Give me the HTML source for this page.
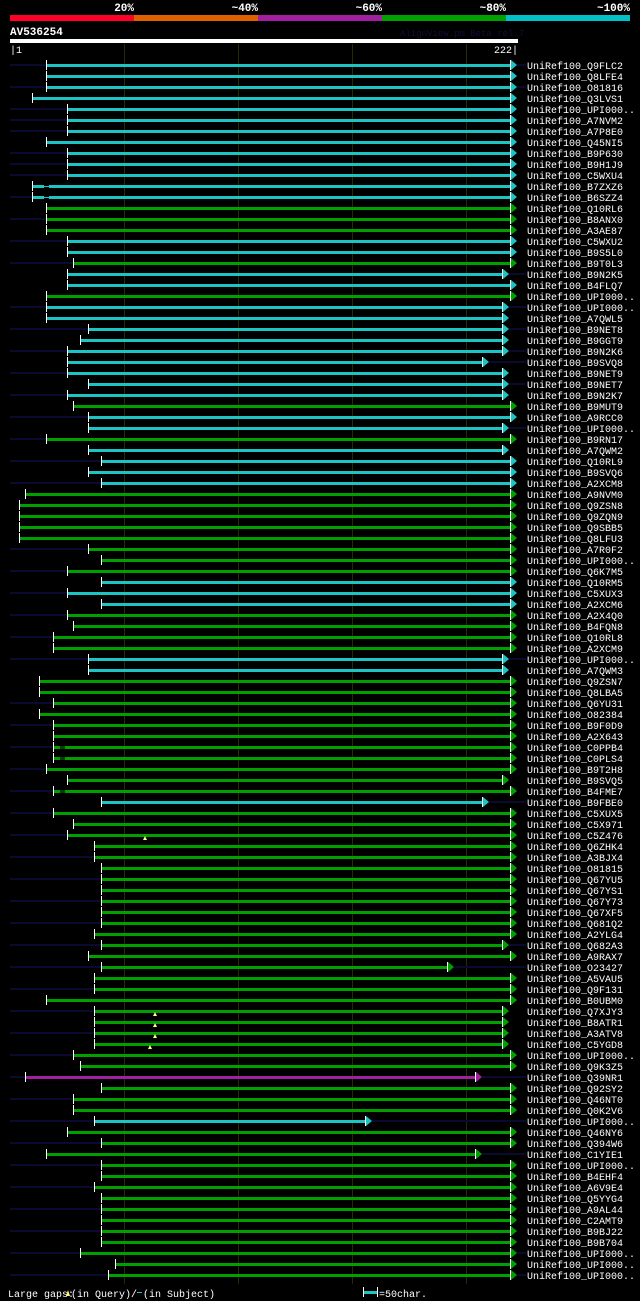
<!DOCTYPE html>
<html><head><meta charset="utf-8"><style>
html,body{margin:0;padding:0;background:#000;}
svg{display:block;}
text{font-family:"Liberation Mono","DejaVu Sans Mono",monospace;}
</style></head><body>
<svg width="640" height="1301" viewBox="0 0 640 1301" xmlns="http://www.w3.org/2000/svg">
<rect width="640" height="1301" fill="#000"/>
<g font-size="11" font-weight="bold" fill="#fff" text-anchor="end">
<text x="134" y="11">20%</text><text x="258" y="11">~40%</text><text x="382" y="11">~60%</text><text x="506" y="11">~80%</text><text x="630" y="11">~100%</text>
</g>
<rect x="10" y="15" width="124" height="6" fill="#ff0028"/>
<rect x="134" y="15" width="124" height="6" fill="#e06000"/>
<rect x="258" y="15" width="124" height="6" fill="#a020a0"/>
<rect x="382" y="15" width="124" height="6" fill="#00a000"/>
<rect x="506" y="15" width="124" height="6" fill="#00c0c8"/>
<text x="10" y="35" font-size="11" font-weight="bold" fill="#fff">AV536254</text>
<text x="400" y="36" font-size="9" fill="#10103a">AlignView.pm Beta rel.7</text>
<rect x="10" y="39" width="508" height="4" fill="#fff"/>
<text x="10" y="53" font-size="10" fill="#fff">|1</text>
<text x="518" y="53" font-size="10" fill="#fff" text-anchor="end">222|</text>
<g fill="#2a2a00">
<rect x="124" y="44" width="1" height="1240"/><rect x="238" y="44" width="1" height="1240"/><rect x="352" y="44" width="1" height="1240"/><rect x="466" y="44" width="1" height="1240"/>
</g>
<defs>
<g id="r"><rect x="0" y="-1" width="16" height="2" fill="#0a0a30"/></g>
</defs>
<g id="rows" font-size="10" fill="#fff">
<!-- each row: bar, start tick, end tick+arrow, label -->
</g>
<g font-size="10">
<!-- rows generated statically -->
<g transform="translate(0,65)"><rect x="10" y="-1" width="36" height="2" fill="#0a0a30"/><rect x="46" y="-1" width="464" height="3" fill="#1cc4c4"/><rect x="46" y="-5" width="1" height="10" fill="#fff"/><rect x="510" y="-5" width="1" height="10" fill="#fff"/><polygon points="511,-5 517,0 511,5" fill="#1cc4c4"/><rect x="517" y="-1" width="9" height="2" fill="#0a0a30"/><text x="527" y="4" fill="#fff">UniRef100_Q9FLC2</text></g>
<g transform="translate(0,76)"><rect x="46" y="-1" width="464" height="3" fill="#1cc4c4"/><rect x="46" y="-5" width="1" height="10" fill="#fff"/><rect x="510" y="-5" width="1" height="10" fill="#fff"/><polygon points="511,-5 517,0 511,5" fill="#1cc4c4"/><text x="527" y="4" fill="#fff">UniRef100_Q8LFE4</text></g>
<g transform="translate(0,87)"><rect x="10" y="-1" width="36" height="2" fill="#0a0a30"/><rect x="46" y="-1" width="464" height="3" fill="#1cc4c4"/><rect x="46" y="-5" width="1" height="10" fill="#fff"/><rect x="510" y="-5" width="1" height="10" fill="#fff"/><polygon points="511,-5 517,0 511,5" fill="#1cc4c4"/><rect x="517" y="-1" width="9" height="2" fill="#0a0a30"/><text x="527" y="4" fill="#fff">UniRef100_O81816</text></g>
<g transform="translate(0,98)"><rect x="32" y="-1" width="478" height="3" fill="#1cc4c4"/><rect x="32" y="-5" width="1" height="10" fill="#fff"/><rect x="510" y="-5" width="1" height="10" fill="#fff"/><polygon points="511,-5 517,0 511,5" fill="#1cc4c4"/><text x="527" y="4" fill="#fff">UniRef100_Q3LVS1</text></g>
<g transform="translate(0,109)"><rect x="10" y="-1" width="57" height="2" fill="#0a0a30"/><rect x="67" y="-1" width="443" height="3" fill="#1cc4c4"/><rect x="67" y="-5" width="1" height="10" fill="#fff"/><rect x="510" y="-5" width="1" height="10" fill="#fff"/><polygon points="511,-5 517,0 511,5" fill="#1cc4c4"/><text x="527" y="4" fill="#fff">UniRef100_UPI000..</text></g>
<g transform="translate(0,120)"><rect x="10" y="-1" width="57" height="2" fill="#0a0a30"/><rect x="67" y="-1" width="443" height="3" fill="#1cc4c4"/><rect x="67" y="-5" width="1" height="10" fill="#fff"/><rect x="510" y="-5" width="1" height="10" fill="#fff"/><polygon points="511,-5 517,0 511,5" fill="#1cc4c4"/><text x="527" y="4" fill="#fff">UniRef100_A7NVM2</text></g>
<g transform="translate(0,131)"><rect x="10" y="-1" width="57" height="2" fill="#0a0a30"/><rect x="67" y="-1" width="443" height="3" fill="#1cc4c4"/><rect x="67" y="-5" width="1" height="10" fill="#fff"/><rect x="510" y="-5" width="1" height="10" fill="#fff"/><polygon points="511,-5 517,0 511,5" fill="#1cc4c4"/><text x="527" y="4" fill="#fff">UniRef100_A7P8E0</text></g>
<g transform="translate(0,142)"><rect x="46" y="-1" width="464" height="3" fill="#1cc4c4"/><rect x="46" y="-5" width="1" height="10" fill="#fff"/><rect x="510" y="-5" width="1" height="10" fill="#fff"/><polygon points="511,-5 517,0 511,5" fill="#1cc4c4"/><text x="527" y="4" fill="#fff">UniRef100_Q45NI5</text></g>
<g transform="translate(0,153)"><rect x="10" y="-1" width="57" height="2" fill="#0a0a30"/><rect x="67" y="-1" width="443" height="3" fill="#1cc4c4"/><rect x="67" y="-5" width="1" height="10" fill="#fff"/><rect x="510" y="-5" width="1" height="10" fill="#fff"/><polygon points="511,-5 517,0 511,5" fill="#1cc4c4"/><text x="527" y="4" fill="#fff">UniRef100_B9P630</text></g>
<g transform="translate(0,164)"><rect x="10" y="-1" width="57" height="2" fill="#0a0a30"/><rect x="67" y="-1" width="443" height="3" fill="#1cc4c4"/><rect x="67" y="-5" width="1" height="10" fill="#fff"/><rect x="510" y="-5" width="1" height="10" fill="#fff"/><polygon points="511,-5 517,0 511,5" fill="#1cc4c4"/><text x="527" y="4" fill="#fff">UniRef100_B9H1J9</text></g>
<g transform="translate(0,175)"><rect x="10" y="-1" width="57" height="2" fill="#0a0a30"/><rect x="67" y="-1" width="443" height="3" fill="#1cc4c4"/><rect x="67" y="-5" width="1" height="10" fill="#fff"/><rect x="510" y="-5" width="1" height="10" fill="#fff"/><polygon points="511,-5 517,0 511,5" fill="#1cc4c4"/><text x="527" y="4" fill="#fff">UniRef100_C5WXU4</text></g>
<g transform="translate(0,186)"><rect x="32" y="-1" width="12" height="3" fill="#1cc4c4"/><rect x="44" y="0" width="5" height="1" fill="#1cc4c4"/><rect x="49" y="-1" width="461" height="3" fill="#1cc4c4"/><rect x="32" y="-5" width="1" height="10" fill="#fff"/><rect x="510" y="-5" width="1" height="10" fill="#fff"/><polygon points="511,-5 517,0 511,5" fill="#1cc4c4"/><text x="527" y="4" fill="#fff">UniRef100_B7ZXZ6</text></g>
<g transform="translate(0,197)"><rect x="10" y="-1" width="22" height="2" fill="#0a0a30"/><rect x="32" y="-1" width="12" height="3" fill="#1cc4c4"/><rect x="44" y="0" width="5" height="1" fill="#1cc4c4"/><rect x="49" y="-1" width="461" height="3" fill="#1cc4c4"/><rect x="32" y="-5" width="1" height="10" fill="#fff"/><rect x="510" y="-5" width="1" height="10" fill="#fff"/><polygon points="511,-5 517,0 511,5" fill="#1cc4c4"/><text x="527" y="4" fill="#fff">UniRef100_B6SZZ4</text></g>
<g transform="translate(0,208)"><rect x="46" y="-1" width="464" height="3" fill="#00a000"/><rect x="46" y="-5" width="1" height="10" fill="#fff"/><rect x="510" y="-5" width="1" height="10" fill="#fff"/><polygon points="511,-5 517,0 511,5" fill="#00a000"/><text x="527" y="4" fill="#fff">UniRef100_Q10RL6</text></g>
<g transform="translate(0,219)"><rect x="10" y="-1" width="36" height="2" fill="#0a0a30"/><rect x="46" y="-1" width="464" height="3" fill="#00a000"/><rect x="46" y="-5" width="1" height="10" fill="#fff"/><rect x="510" y="-5" width="1" height="10" fill="#fff"/><polygon points="511,-5 517,0 511,5" fill="#00a000"/><text x="527" y="4" fill="#fff">UniRef100_B8ANX0</text></g>
<g transform="translate(0,230)"><rect x="46" y="-1" width="464" height="3" fill="#00a000"/><rect x="46" y="-5" width="1" height="10" fill="#fff"/><rect x="510" y="-5" width="1" height="10" fill="#fff"/><polygon points="511,-5 517,0 511,5" fill="#00a000"/><text x="527" y="4" fill="#fff">UniRef100_A3AE87</text></g>
<g transform="translate(0,241)"><rect x="10" y="-1" width="57" height="2" fill="#0a0a30"/><rect x="67" y="-1" width="443" height="3" fill="#1cc4c4"/><rect x="67" y="-5" width="1" height="10" fill="#fff"/><rect x="510" y="-5" width="1" height="10" fill="#fff"/><polygon points="511,-5 517,0 511,5" fill="#1cc4c4"/><text x="527" y="4" fill="#fff">UniRef100_C5WXU2</text></g>
<g transform="translate(0,252)"><rect x="67" y="-1" width="443" height="3" fill="#1cc4c4"/><rect x="67" y="-5" width="1" height="10" fill="#fff"/><rect x="510" y="-5" width="1" height="10" fill="#fff"/><polygon points="511,-5 517,0 511,5" fill="#1cc4c4"/><text x="527" y="4" fill="#fff">UniRef100_B9S5L0</text></g>
<g transform="translate(0,263)"><rect x="10" y="-1" width="63" height="2" fill="#0a0a30"/><rect x="73" y="-1" width="437" height="3" fill="#00a000"/><rect x="73" y="-5" width="1" height="10" fill="#fff"/><rect x="510" y="-5" width="1" height="10" fill="#fff"/><polygon points="511,-5 517,0 511,5" fill="#00a000"/><text x="527" y="4" fill="#fff">UniRef100_B9T0L3</text></g>
<g transform="translate(0,274)"><rect x="67" y="-1" width="435" height="3" fill="#1cc4c4"/><rect x="67" y="-5" width="1" height="10" fill="#fff"/><rect x="502" y="-5" width="1" height="10" fill="#fff"/><polygon points="503,-5 509,0 503,5" fill="#1cc4c4"/><rect x="509" y="-1" width="17" height="2" fill="#0a0a30"/><text x="527" y="4" fill="#fff">UniRef100_B9N2K5</text></g>
<g transform="translate(0,285)"><rect x="67" y="-1" width="443" height="3" fill="#1cc4c4"/><rect x="67" y="-5" width="1" height="10" fill="#fff"/><rect x="510" y="-5" width="1" height="10" fill="#fff"/><polygon points="511,-5 517,0 511,5" fill="#1cc4c4"/><text x="527" y="4" fill="#fff">UniRef100_B4FLQ7</text></g>
<g transform="translate(0,296)"><rect x="46" y="-1" width="464" height="3" fill="#00a000"/><rect x="46" y="-5" width="1" height="10" fill="#fff"/><rect x="510" y="-5" width="1" height="10" fill="#fff"/><polygon points="511,-5 517,0 511,5" fill="#00a000"/><text x="527" y="4" fill="#fff">UniRef100_UPI000..</text></g>
<g transform="translate(0,307)"><rect x="10" y="-1" width="36" height="2" fill="#0a0a30"/><rect x="46" y="-1" width="456" height="3" fill="#1cc4c4"/><rect x="46" y="-5" width="1" height="10" fill="#fff"/><rect x="502" y="-5" width="1" height="10" fill="#fff"/><polygon points="503,-5 509,0 503,5" fill="#1cc4c4"/><rect x="509" y="-1" width="17" height="2" fill="#0a0a30"/><text x="527" y="4" fill="#fff">UniRef100_UPI000..</text></g>
<g transform="translate(0,318)"><rect x="46" y="-1" width="456" height="3" fill="#1cc4c4"/><rect x="46" y="-5" width="1" height="10" fill="#fff"/><rect x="502" y="-5" width="1" height="10" fill="#fff"/><polygon points="503,-5 509,0 503,5" fill="#1cc4c4"/><text x="527" y="4" fill="#fff">UniRef100_A7QWL5</text></g>
<g transform="translate(0,329)"><rect x="10" y="-1" width="78" height="2" fill="#0a0a30"/><rect x="88" y="-1" width="414" height="3" fill="#1cc4c4"/><rect x="88" y="-5" width="1" height="10" fill="#fff"/><rect x="502" y="-5" width="1" height="10" fill="#fff"/><polygon points="503,-5 509,0 503,5" fill="#1cc4c4"/><rect x="509" y="-1" width="17" height="2" fill="#0a0a30"/><text x="527" y="4" fill="#fff">UniRef100_B9NET8</text></g>
<g transform="translate(0,340)"><rect x="80" y="-1" width="422" height="3" fill="#1cc4c4"/><rect x="80" y="-5" width="1" height="10" fill="#fff"/><rect x="502" y="-5" width="1" height="10" fill="#fff"/><polygon points="503,-5 509,0 503,5" fill="#1cc4c4"/><text x="527" y="4" fill="#fff">UniRef100_B9GGT9</text></g>
<g transform="translate(0,351)"><rect x="10" y="-1" width="57" height="2" fill="#0a0a30"/><rect x="67" y="-1" width="435" height="3" fill="#1cc4c4"/><rect x="67" y="-5" width="1" height="10" fill="#fff"/><rect x="502" y="-5" width="1" height="10" fill="#fff"/><polygon points="503,-5 509,0 503,5" fill="#1cc4c4"/><rect x="509" y="-1" width="17" height="2" fill="#0a0a30"/><text x="527" y="4" fill="#fff">UniRef100_B9N2K6</text></g>
<g transform="translate(0,362)"><rect x="67" y="-1" width="415" height="3" fill="#1cc4c4"/><rect x="67" y="-5" width="1" height="10" fill="#fff"/><rect x="482" y="-5" width="1" height="10" fill="#fff"/><polygon points="483,-5 489,0 483,5" fill="#1cc4c4"/><rect x="489" y="-1" width="37" height="2" fill="#0a0a30"/><text x="527" y="4" fill="#fff">UniRef100_B9SVQ8</text></g>
<g transform="translate(0,373)"><rect x="10" y="-1" width="57" height="2" fill="#0a0a30"/><rect x="67" y="-1" width="435" height="3" fill="#1cc4c4"/><rect x="67" y="-5" width="1" height="10" fill="#fff"/><rect x="502" y="-5" width="1" height="10" fill="#fff"/><polygon points="503,-5 509,0 503,5" fill="#1cc4c4"/><text x="527" y="4" fill="#fff">UniRef100_B9NET9</text></g>
<g transform="translate(0,384)"><rect x="88" y="-1" width="414" height="3" fill="#1cc4c4"/><rect x="88" y="-5" width="1" height="10" fill="#fff"/><rect x="502" y="-5" width="1" height="10" fill="#fff"/><polygon points="503,-5 509,0 503,5" fill="#1cc4c4"/><rect x="509" y="-1" width="17" height="2" fill="#0a0a30"/><text x="527" y="4" fill="#fff">UniRef100_B9NET7</text></g>
<g transform="translate(0,395)"><rect x="10" y="-1" width="57" height="2" fill="#0a0a30"/><rect x="67" y="-1" width="435" height="3" fill="#1cc4c4"/><rect x="67" y="-5" width="1" height="10" fill="#fff"/><rect x="502" y="-5" width="1" height="10" fill="#fff"/><polygon points="503,-5 509,0 503,5" fill="#1cc4c4"/><text x="527" y="4" fill="#fff">UniRef100_B9N2K7</text></g>
<g transform="translate(0,406)"><rect x="73" y="-1" width="437" height="3" fill="#00a000"/><rect x="73" y="-5" width="1" height="10" fill="#fff"/><rect x="510" y="-5" width="1" height="10" fill="#fff"/><polygon points="511,-5 517,0 511,5" fill="#00a000"/><text x="527" y="4" fill="#fff">UniRef100_B9MUT9</text></g>
<g transform="translate(0,417)"><rect x="10" y="-1" width="78" height="2" fill="#0a0a30"/><rect x="88" y="-1" width="422" height="3" fill="#1cc4c4"/><rect x="88" y="-5" width="1" height="10" fill="#fff"/><rect x="510" y="-5" width="1" height="10" fill="#fff"/><polygon points="511,-5 517,0 511,5" fill="#1cc4c4"/><text x="527" y="4" fill="#fff">UniRef100_A9RCC0</text></g>
<g transform="translate(0,428)"><rect x="88" y="-1" width="414" height="3" fill="#1cc4c4"/><rect x="88" y="-5" width="1" height="10" fill="#fff"/><rect x="502" y="-5" width="1" height="10" fill="#fff"/><polygon points="503,-5 509,0 503,5" fill="#1cc4c4"/><rect x="509" y="-1" width="17" height="2" fill="#0a0a30"/><text x="527" y="4" fill="#fff">UniRef100_UPI000..</text></g>
<g transform="translate(0,439)"><rect x="10" y="-1" width="36" height="2" fill="#0a0a30"/><rect x="46" y="-1" width="464" height="3" fill="#00a000"/><rect x="46" y="-5" width="1" height="10" fill="#fff"/><rect x="510" y="-5" width="1" height="10" fill="#fff"/><polygon points="511,-5 517,0 511,5" fill="#00a000"/><text x="527" y="4" fill="#fff">UniRef100_B9RN17</text></g>
<g transform="translate(0,450)"><rect x="88" y="-1" width="414" height="3" fill="#1cc4c4"/><rect x="88" y="-5" width="1" height="10" fill="#fff"/><rect x="502" y="-5" width="1" height="10" fill="#fff"/><polygon points="503,-5 509,0 503,5" fill="#1cc4c4"/><text x="527" y="4" fill="#fff">UniRef100_A7QWM2</text></g>
<g transform="translate(0,461)"><rect x="10" y="-1" width="91" height="2" fill="#0a0a30"/><rect x="101" y="-1" width="409" height="3" fill="#1cc4c4"/><rect x="101" y="-5" width="1" height="10" fill="#fff"/><rect x="510" y="-5" width="1" height="10" fill="#fff"/><polygon points="511,-5 517,0 511,5" fill="#1cc4c4"/><text x="527" y="4" fill="#fff">UniRef100_Q10RL9</text></g>
<g transform="translate(0,472)"><rect x="88" y="-1" width="422" height="3" fill="#1cc4c4"/><rect x="88" y="-5" width="1" height="10" fill="#fff"/><rect x="510" y="-5" width="1" height="10" fill="#fff"/><polygon points="511,-5 517,0 511,5" fill="#1cc4c4"/><text x="527" y="4" fill="#fff">UniRef100_B9SVQ6</text></g>
<g transform="translate(0,483)"><rect x="10" y="-1" width="91" height="2" fill="#0a0a30"/><rect x="101" y="-1" width="409" height="3" fill="#1cc4c4"/><rect x="101" y="-5" width="1" height="10" fill="#fff"/><rect x="510" y="-5" width="1" height="10" fill="#fff"/><polygon points="511,-5 517,0 511,5" fill="#1cc4c4"/><text x="527" y="4" fill="#fff">UniRef100_A2XCM8</text></g>
<g transform="translate(0,494)"><rect x="25" y="-1" width="485" height="3" fill="#00a000"/><rect x="25" y="-5" width="1" height="10" fill="#fff"/><rect x="510" y="-5" width="1" height="10" fill="#fff"/><polygon points="511,-5 517,0 511,5" fill="#00a000"/><text x="527" y="4" fill="#fff">UniRef100_A9NVM0</text></g>
<g transform="translate(0,505)"><rect x="19" y="-1" width="491" height="3" fill="#00a000"/><rect x="19" y="-5" width="1" height="10" fill="#fff"/><rect x="510" y="-5" width="1" height="10" fill="#fff"/><polygon points="511,-5 517,0 511,5" fill="#00a000"/><text x="527" y="4" fill="#fff">UniRef100_Q9ZSN8</text></g>
<g transform="translate(0,516)"><rect x="19" y="-1" width="491" height="3" fill="#00a000"/><rect x="19" y="-5" width="1" height="10" fill="#fff"/><rect x="510" y="-5" width="1" height="10" fill="#fff"/><polygon points="511,-5 517,0 511,5" fill="#00a000"/><text x="527" y="4" fill="#fff">UniRef100_Q9ZQN9</text></g>
<g transform="translate(0,527)"><rect x="19" y="-1" width="491" height="3" fill="#00a000"/><rect x="19" y="-5" width="1" height="10" fill="#fff"/><rect x="510" y="-5" width="1" height="10" fill="#fff"/><polygon points="511,-5 517,0 511,5" fill="#00a000"/><text x="527" y="4" fill="#fff">UniRef100_Q9SBB5</text></g>
<g transform="translate(0,538)"><rect x="19" y="-1" width="491" height="3" fill="#00a000"/><rect x="19" y="-5" width="1" height="10" fill="#fff"/><rect x="510" y="-5" width="1" height="10" fill="#fff"/><polygon points="511,-5 517,0 511,5" fill="#00a000"/><text x="527" y="4" fill="#fff">UniRef100_Q8LFU3</text></g>
<g transform="translate(0,549)"><rect x="10" y="-1" width="78" height="2" fill="#0a0a30"/><rect x="88" y="-1" width="422" height="3" fill="#00a000"/><rect x="88" y="-5" width="1" height="10" fill="#fff"/><rect x="510" y="-5" width="1" height="10" fill="#fff"/><polygon points="511,-5 517,0 511,5" fill="#00a000"/><text x="527" y="4" fill="#fff">UniRef100_A7R0F2</text></g>
<g transform="translate(0,560)"><rect x="101" y="-1" width="409" height="3" fill="#00a000"/><rect x="101" y="-5" width="1" height="10" fill="#fff"/><rect x="510" y="-5" width="1" height="10" fill="#fff"/><polygon points="511,-5 517,0 511,5" fill="#00a000"/><text x="527" y="4" fill="#fff">UniRef100_UPI000..</text></g>
<g transform="translate(0,571)"><rect x="10" y="-1" width="57" height="2" fill="#0a0a30"/><rect x="67" y="-1" width="443" height="3" fill="#00a000"/><rect x="67" y="-5" width="1" height="10" fill="#fff"/><rect x="510" y="-5" width="1" height="10" fill="#fff"/><polygon points="511,-5 517,0 511,5" fill="#00a000"/><text x="527" y="4" fill="#fff">UniRef100_Q6K7M5</text></g>
<g transform="translate(0,582)"><rect x="101" y="-1" width="409" height="3" fill="#1cc4c4"/><rect x="101" y="-5" width="1" height="10" fill="#fff"/><rect x="510" y="-5" width="1" height="10" fill="#fff"/><polygon points="511,-5 517,0 511,5" fill="#1cc4c4"/><text x="527" y="4" fill="#fff">UniRef100_Q10RM5</text></g>
<g transform="translate(0,593)"><rect x="10" y="-1" width="57" height="2" fill="#0a0a30"/><rect x="67" y="-1" width="443" height="3" fill="#1cc4c4"/><rect x="67" y="-5" width="1" height="10" fill="#fff"/><rect x="510" y="-5" width="1" height="10" fill="#fff"/><polygon points="511,-5 517,0 511,5" fill="#1cc4c4"/><text x="527" y="4" fill="#fff">UniRef100_C5XUX3</text></g>
<g transform="translate(0,604)"><rect x="101" y="-1" width="409" height="3" fill="#1cc4c4"/><rect x="101" y="-5" width="1" height="10" fill="#fff"/><rect x="510" y="-5" width="1" height="10" fill="#fff"/><polygon points="511,-5 517,0 511,5" fill="#1cc4c4"/><text x="527" y="4" fill="#fff">UniRef100_A2XCM6</text></g>
<g transform="translate(0,615)"><rect x="10" y="-1" width="57" height="2" fill="#0a0a30"/><rect x="67" y="-1" width="443" height="3" fill="#00a000"/><rect x="67" y="-5" width="1" height="10" fill="#fff"/><rect x="510" y="-5" width="1" height="10" fill="#fff"/><polygon points="511,-5 517,0 511,5" fill="#00a000"/><text x="527" y="4" fill="#fff">UniRef100_A2X4Q0</text></g>
<g transform="translate(0,626)"><rect x="73" y="-1" width="437" height="3" fill="#00a000"/><rect x="73" y="-5" width="1" height="10" fill="#fff"/><rect x="510" y="-5" width="1" height="10" fill="#fff"/><polygon points="511,-5 517,0 511,5" fill="#00a000"/><text x="527" y="4" fill="#fff">UniRef100_B4FQN8</text></g>
<g transform="translate(0,637)"><rect x="10" y="-1" width="43" height="2" fill="#0a0a30"/><rect x="53" y="-1" width="457" height="3" fill="#00a000"/><rect x="53" y="-5" width="1" height="10" fill="#fff"/><rect x="510" y="-5" width="1" height="10" fill="#fff"/><polygon points="511,-5 517,0 511,5" fill="#00a000"/><text x="527" y="4" fill="#fff">UniRef100_Q10RL8</text></g>
<g transform="translate(0,648)"><rect x="53" y="-1" width="457" height="3" fill="#00a000"/><rect x="53" y="-5" width="1" height="10" fill="#fff"/><rect x="510" y="-5" width="1" height="10" fill="#fff"/><polygon points="511,-5 517,0 511,5" fill="#00a000"/><text x="527" y="4" fill="#fff">UniRef100_A2XCM9</text></g>
<g transform="translate(0,659)"><rect x="10" y="-1" width="78" height="2" fill="#0a0a30"/><rect x="88" y="-1" width="414" height="3" fill="#1cc4c4"/><rect x="88" y="-5" width="1" height="10" fill="#fff"/><rect x="502" y="-5" width="1" height="10" fill="#fff"/><polygon points="503,-5 509,0 503,5" fill="#1cc4c4"/><rect x="509" y="-1" width="17" height="2" fill="#0a0a30"/><text x="527" y="4" fill="#fff">UniRef100_UPI000..</text></g>
<g transform="translate(0,670)"><rect x="88" y="-1" width="414" height="3" fill="#1cc4c4"/><rect x="88" y="-5" width="1" height="10" fill="#fff"/><rect x="502" y="-5" width="1" height="10" fill="#fff"/><polygon points="503,-5 509,0 503,5" fill="#1cc4c4"/><text x="527" y="4" fill="#fff">UniRef100_A7QWM3</text></g>
<g transform="translate(0,681)"><rect x="39" y="-1" width="471" height="3" fill="#00a000"/><rect x="39" y="-5" width="1" height="10" fill="#fff"/><rect x="510" y="-5" width="1" height="10" fill="#fff"/><polygon points="511,-5 517,0 511,5" fill="#00a000"/><text x="527" y="4" fill="#fff">UniRef100_Q9ZSN7</text></g>
<g transform="translate(0,692)"><rect x="39" y="-1" width="471" height="3" fill="#00a000"/><rect x="39" y="-5" width="1" height="10" fill="#fff"/><rect x="510" y="-5" width="1" height="10" fill="#fff"/><polygon points="511,-5 517,0 511,5" fill="#00a000"/><text x="527" y="4" fill="#fff">UniRef100_Q8LBA5</text></g>
<g transform="translate(0,703)"><rect x="10" y="-1" width="43" height="2" fill="#0a0a30"/><rect x="53" y="-1" width="457" height="3" fill="#00a000"/><rect x="53" y="-5" width="1" height="10" fill="#fff"/><rect x="510" y="-5" width="1" height="10" fill="#fff"/><polygon points="511,-5 517,0 511,5" fill="#00a000"/><text x="527" y="4" fill="#fff">UniRef100_Q6YU31</text></g>
<g transform="translate(0,714)"><rect x="39" y="-1" width="471" height="3" fill="#00a000"/><rect x="39" y="-5" width="1" height="10" fill="#fff"/><rect x="510" y="-5" width="1" height="10" fill="#fff"/><polygon points="511,-5 517,0 511,5" fill="#00a000"/><text x="527" y="4" fill="#fff">UniRef100_O82384</text></g>
<g transform="translate(0,725)"><rect x="10" y="-1" width="43" height="2" fill="#0a0a30"/><rect x="53" y="-1" width="457" height="3" fill="#00a000"/><rect x="53" y="-5" width="1" height="10" fill="#fff"/><rect x="510" y="-5" width="1" height="10" fill="#fff"/><polygon points="511,-5 517,0 511,5" fill="#00a000"/><text x="527" y="4" fill="#fff">UniRef100_B9F0D9</text></g>
<g transform="translate(0,736)"><rect x="53" y="-1" width="457" height="3" fill="#00a000"/><rect x="53" y="-5" width="1" height="10" fill="#fff"/><rect x="510" y="-5" width="1" height="10" fill="#fff"/><polygon points="511,-5 517,0 511,5" fill="#00a000"/><text x="527" y="4" fill="#fff">UniRef100_A2X643</text></g>
<g transform="translate(0,747)"><rect x="10" y="-1" width="43" height="2" fill="#0a0a30"/><rect x="53" y="-1" width="457" height="3" fill="#00a000"/><rect x="60" y="-1" width="5" height="3" fill="#004000"/><rect x="53" y="-5" width="1" height="10" fill="#fff"/><rect x="510" y="-5" width="1" height="10" fill="#fff"/><polygon points="511,-5 517,0 511,5" fill="#00a000"/><text x="527" y="4" fill="#fff">UniRef100_C0PPB4</text></g>
<g transform="translate(0,758)"><rect x="53" y="-1" width="457" height="3" fill="#00a000"/><rect x="60" y="-1" width="5" height="3" fill="#004000"/><rect x="53" y="-5" width="1" height="10" fill="#fff"/><rect x="510" y="-5" width="1" height="10" fill="#fff"/><polygon points="511,-5 517,0 511,5" fill="#00a000"/><text x="527" y="4" fill="#fff">UniRef100_C0PLS4</text></g>
<g transform="translate(0,769)"><rect x="10" y="-1" width="36" height="2" fill="#0a0a30"/><rect x="46" y="-1" width="464" height="3" fill="#00a000"/><rect x="46" y="-5" width="1" height="10" fill="#fff"/><rect x="510" y="-5" width="1" height="10" fill="#fff"/><polygon points="511,-5 517,0 511,5" fill="#00a000"/><text x="527" y="4" fill="#fff">UniRef100_B9T2H8</text></g>
<g transform="translate(0,780)"><rect x="67" y="-1" width="435" height="3" fill="#00a000"/><rect x="67" y="-5" width="1" height="10" fill="#fff"/><rect x="502" y="-5" width="1" height="10" fill="#fff"/><polygon points="503,-5 509,0 503,5" fill="#00a000"/><text x="527" y="4" fill="#fff">UniRef100_B9SVQ5</text></g>
<g transform="translate(0,791)"><rect x="10" y="-1" width="43" height="2" fill="#0a0a30"/><rect x="53" y="-1" width="457" height="3" fill="#00a000"/><rect x="60" y="-1" width="5" height="3" fill="#004000"/><rect x="53" y="-5" width="1" height="10" fill="#fff"/><rect x="510" y="-5" width="1" height="10" fill="#fff"/><polygon points="511,-5 517,0 511,5" fill="#00a000"/><text x="527" y="4" fill="#fff">UniRef100_B4FME7</text></g>
<g transform="translate(0,802)"><rect x="101" y="-1" width="381" height="3" fill="#1cc4c4"/><rect x="101" y="-5" width="1" height="10" fill="#fff"/><rect x="482" y="-5" width="1" height="10" fill="#fff"/><polygon points="483,-5 489,0 483,5" fill="#1cc4c4"/><rect x="489" y="-1" width="37" height="2" fill="#0a0a30"/><text x="527" y="4" fill="#fff">UniRef100_B9FBE0</text></g>
<g transform="translate(0,813)"><rect x="10" y="-1" width="43" height="2" fill="#0a0a30"/><rect x="53" y="-1" width="457" height="3" fill="#00a000"/><rect x="53" y="-5" width="1" height="10" fill="#fff"/><rect x="510" y="-5" width="1" height="10" fill="#fff"/><polygon points="511,-5 517,0 511,5" fill="#00a000"/><text x="527" y="4" fill="#fff">UniRef100_C5XUX5</text></g>
<g transform="translate(0,824)"><rect x="73" y="-1" width="437" height="3" fill="#00a000"/><rect x="73" y="-5" width="1" height="10" fill="#fff"/><rect x="510" y="-5" width="1" height="10" fill="#fff"/><polygon points="511,-5 517,0 511,5" fill="#00a000"/><text x="527" y="4" fill="#fff">UniRef100_C5X971</text></g>
<g transform="translate(0,835)"><rect x="10" y="-1" width="57" height="2" fill="#0a0a30"/><rect x="67" y="-1" width="443" height="3" fill="#00a000"/><rect x="67" y="-5" width="1" height="10" fill="#fff"/><rect x="510" y="-5" width="1" height="10" fill="#fff"/><polygon points="511,-5 517,0 511,5" fill="#00a000"/><polygon points="145,1 143,5 147,5" fill="#ffff80"/><text x="527" y="4" fill="#fff">UniRef100_C5Z476</text></g>
<g transform="translate(0,846)"><rect x="94" y="-1" width="416" height="3" fill="#00a000"/><rect x="94" y="-5" width="1" height="10" fill="#fff"/><rect x="510" y="-5" width="1" height="10" fill="#fff"/><polygon points="511,-5 517,0 511,5" fill="#00a000"/><text x="527" y="4" fill="#fff">UniRef100_Q6ZHK4</text></g>
<g transform="translate(0,857)"><rect x="10" y="-1" width="84" height="2" fill="#0a0a30"/><rect x="94" y="-1" width="416" height="3" fill="#00a000"/><rect x="94" y="-5" width="1" height="10" fill="#fff"/><rect x="510" y="-5" width="1" height="10" fill="#fff"/><polygon points="511,-5 517,0 511,5" fill="#00a000"/><text x="527" y="4" fill="#fff">UniRef100_A3BJX4</text></g>
<g transform="translate(0,868)"><rect x="101" y="-1" width="409" height="3" fill="#00a000"/><rect x="101" y="-5" width="1" height="10" fill="#fff"/><rect x="510" y="-5" width="1" height="10" fill="#fff"/><polygon points="511,-5 517,0 511,5" fill="#00a000"/><text x="527" y="4" fill="#fff">UniRef100_O81815</text></g>
<g transform="translate(0,879)"><rect x="10" y="-1" width="91" height="2" fill="#0a0a30"/><rect x="101" y="-1" width="409" height="3" fill="#00a000"/><rect x="101" y="-5" width="1" height="10" fill="#fff"/><rect x="510" y="-5" width="1" height="10" fill="#fff"/><polygon points="511,-5 517,0 511,5" fill="#00a000"/><text x="527" y="4" fill="#fff">UniRef100_Q67YU5</text></g>
<g transform="translate(0,890)"><rect x="101" y="-1" width="409" height="3" fill="#00a000"/><rect x="101" y="-5" width="1" height="10" fill="#fff"/><rect x="510" y="-5" width="1" height="10" fill="#fff"/><polygon points="511,-5 517,0 511,5" fill="#00a000"/><text x="527" y="4" fill="#fff">UniRef100_Q67YS1</text></g>
<g transform="translate(0,901)"><rect x="10" y="-1" width="91" height="2" fill="#0a0a30"/><rect x="101" y="-1" width="409" height="3" fill="#00a000"/><rect x="101" y="-5" width="1" height="10" fill="#fff"/><rect x="510" y="-5" width="1" height="10" fill="#fff"/><polygon points="511,-5 517,0 511,5" fill="#00a000"/><text x="527" y="4" fill="#fff">UniRef100_Q67Y73</text></g>
<g transform="translate(0,912)"><rect x="101" y="-1" width="409" height="3" fill="#00a000"/><rect x="101" y="-5" width="1" height="10" fill="#fff"/><rect x="510" y="-5" width="1" height="10" fill="#fff"/><polygon points="511,-5 517,0 511,5" fill="#00a000"/><text x="527" y="4" fill="#fff">UniRef100_Q67XF5</text></g>
<g transform="translate(0,923)"><rect x="10" y="-1" width="91" height="2" fill="#0a0a30"/><rect x="101" y="-1" width="409" height="3" fill="#00a000"/><rect x="101" y="-5" width="1" height="10" fill="#fff"/><rect x="510" y="-5" width="1" height="10" fill="#fff"/><polygon points="511,-5 517,0 511,5" fill="#00a000"/><text x="527" y="4" fill="#fff">UniRef100_Q681Q2</text></g>
<g transform="translate(0,934)"><rect x="94" y="-1" width="416" height="3" fill="#00a000"/><rect x="94" y="-5" width="1" height="10" fill="#fff"/><rect x="510" y="-5" width="1" height="10" fill="#fff"/><polygon points="511,-5 517,0 511,5" fill="#00a000"/><text x="527" y="4" fill="#fff">UniRef100_A2YLG4</text></g>
<g transform="translate(0,945)"><rect x="10" y="-1" width="91" height="2" fill="#0a0a30"/><rect x="101" y="-1" width="401" height="3" fill="#00a000"/><rect x="101" y="-5" width="1" height="10" fill="#fff"/><rect x="502" y="-5" width="1" height="10" fill="#fff"/><polygon points="503,-5 509,0 503,5" fill="#00a000"/><rect x="509" y="-1" width="17" height="2" fill="#0a0a30"/><text x="527" y="4" fill="#fff">UniRef100_Q682A3</text></g>
<g transform="translate(0,956)"><rect x="88" y="-1" width="422" height="3" fill="#00a000"/><rect x="88" y="-5" width="1" height="10" fill="#fff"/><rect x="510" y="-5" width="1" height="10" fill="#fff"/><polygon points="511,-5 517,0 511,5" fill="#00a000"/><text x="527" y="4" fill="#fff">UniRef100_A9RAX7</text></g>
<g transform="translate(0,967)"><rect x="10" y="-1" width="91" height="2" fill="#0a0a30"/><rect x="101" y="-1" width="346" height="3" fill="#00a000"/><rect x="101" y="-5" width="1" height="10" fill="#fff"/><rect x="447" y="-5" width="1" height="10" fill="#fff"/><polygon points="448,-5 454,0 448,5" fill="#00a000"/><rect x="454" y="-1" width="72" height="2" fill="#0a0a30"/><text x="527" y="4" fill="#fff">UniRef100_O23427</text></g>
<g transform="translate(0,978)"><rect x="94" y="-1" width="416" height="3" fill="#00a000"/><rect x="94" y="-5" width="1" height="10" fill="#fff"/><rect x="510" y="-5" width="1" height="10" fill="#fff"/><polygon points="511,-5 517,0 511,5" fill="#00a000"/><text x="527" y="4" fill="#fff">UniRef100_A5VAU5</text></g>
<g transform="translate(0,989)"><rect x="10" y="-1" width="84" height="2" fill="#0a0a30"/><rect x="94" y="-1" width="416" height="3" fill="#00a000"/><rect x="94" y="-5" width="1" height="10" fill="#fff"/><rect x="510" y="-5" width="1" height="10" fill="#fff"/><polygon points="511,-5 517,0 511,5" fill="#00a000"/><text x="527" y="4" fill="#fff">UniRef100_Q9F131</text></g>
<g transform="translate(0,1000)"><rect x="46" y="-1" width="464" height="3" fill="#00a000"/><rect x="46" y="-5" width="1" height="10" fill="#fff"/><rect x="510" y="-5" width="1" height="10" fill="#fff"/><polygon points="511,-5 517,0 511,5" fill="#00a000"/><text x="527" y="4" fill="#fff">UniRef100_B0UBM0</text></g>
<g transform="translate(0,1011)"><rect x="10" y="-1" width="84" height="2" fill="#0a0a30"/><rect x="94" y="-1" width="408" height="3" fill="#00a000"/><rect x="94" y="-5" width="1" height="10" fill="#fff"/><rect x="502" y="-5" width="1" height="10" fill="#fff"/><polygon points="503,-5 509,0 503,5" fill="#00a000"/><polygon points="155,1 153,5 157,5" fill="#ffff80"/><text x="527" y="4" fill="#fff">UniRef100_Q7XJY3</text></g>
<g transform="translate(0,1022)"><rect x="94" y="-1" width="408" height="3" fill="#00a000"/><rect x="94" y="-5" width="1" height="10" fill="#fff"/><rect x="502" y="-5" width="1" height="10" fill="#fff"/><polygon points="503,-5 509,0 503,5" fill="#00a000"/><polygon points="155,1 153,5 157,5" fill="#ffff80"/><text x="527" y="4" fill="#fff">UniRef100_B8ATR1</text></g>
<g transform="translate(0,1033)"><rect x="10" y="-1" width="84" height="2" fill="#0a0a30"/><rect x="94" y="-1" width="408" height="3" fill="#00a000"/><rect x="94" y="-5" width="1" height="10" fill="#fff"/><rect x="502" y="-5" width="1" height="10" fill="#fff"/><polygon points="503,-5 509,0 503,5" fill="#00a000"/><polygon points="155,1 153,5 157,5" fill="#ffff80"/><text x="527" y="4" fill="#fff">UniRef100_A3ATV8</text></g>
<g transform="translate(0,1044)"><rect x="94" y="-1" width="408" height="3" fill="#00a000"/><rect x="94" y="-5" width="1" height="10" fill="#fff"/><rect x="502" y="-5" width="1" height="10" fill="#fff"/><polygon points="503,-5 509,0 503,5" fill="#00a000"/><polygon points="150,1 148,5 152,5" fill="#ffff80"/><text x="527" y="4" fill="#fff">UniRef100_C5YGD8</text></g>
<g transform="translate(0,1055)"><rect x="10" y="-1" width="63" height="2" fill="#0a0a30"/><rect x="73" y="-1" width="437" height="3" fill="#00a000"/><rect x="73" y="-5" width="1" height="10" fill="#fff"/><rect x="510" y="-5" width="1" height="10" fill="#fff"/><polygon points="511,-5 517,0 511,5" fill="#00a000"/><text x="527" y="4" fill="#fff">UniRef100_UPI000..</text></g>
<g transform="translate(0,1066)"><rect x="80" y="-1" width="430" height="3" fill="#00a000"/><rect x="80" y="-5" width="1" height="10" fill="#fff"/><rect x="510" y="-5" width="1" height="10" fill="#fff"/><polygon points="511,-5 517,0 511,5" fill="#00a000"/><text x="527" y="4" fill="#fff">UniRef100_Q9K3Z5</text></g>
<g transform="translate(0,1077)"><rect x="10" y="-1" width="15" height="2" fill="#0a0a30"/><rect x="25" y="-1" width="450" height="3" fill="#a020a0"/><rect x="25" y="-5" width="1" height="10" fill="#fff"/><rect x="475" y="-5" width="1" height="10" fill="#fff"/><polygon points="476,-5 482,0 476,5" fill="#a020a0"/><rect x="482" y="-1" width="44" height="2" fill="#0a0a30"/><text x="527" y="4" fill="#fff">UniRef100_Q39NR1</text></g>
<g transform="translate(0,1088)"><rect x="101" y="-1" width="409" height="3" fill="#00a000"/><rect x="101" y="-5" width="1" height="10" fill="#fff"/><rect x="510" y="-5" width="1" height="10" fill="#fff"/><polygon points="511,-5 517,0 511,5" fill="#00a000"/><text x="527" y="4" fill="#fff">UniRef100_Q92SY2</text></g>
<g transform="translate(0,1099)"><rect x="10" y="-1" width="63" height="2" fill="#0a0a30"/><rect x="73" y="-1" width="437" height="3" fill="#00a000"/><rect x="73" y="-5" width="1" height="10" fill="#fff"/><rect x="510" y="-5" width="1" height="10" fill="#fff"/><polygon points="511,-5 517,0 511,5" fill="#00a000"/><text x="527" y="4" fill="#fff">UniRef100_Q46NT0</text></g>
<g transform="translate(0,1110)"><rect x="73" y="-1" width="437" height="3" fill="#00a000"/><rect x="73" y="-5" width="1" height="10" fill="#fff"/><rect x="510" y="-5" width="1" height="10" fill="#fff"/><polygon points="511,-5 517,0 511,5" fill="#00a000"/><text x="527" y="4" fill="#fff">UniRef100_Q0K2V6</text></g>
<g transform="translate(0,1121)"><rect x="10" y="-1" width="84" height="2" fill="#0a0a30"/><rect x="94" y="-1" width="271" height="3" fill="#1cc4c4"/><rect x="94" y="-5" width="1" height="10" fill="#fff"/><rect x="365" y="-5" width="1" height="10" fill="#fff"/><polygon points="366,-5 372,0 366,5" fill="#1cc4c4"/><rect x="372" y="-1" width="154" height="2" fill="#0a0a30"/><text x="527" y="4" fill="#fff">UniRef100_UPI000..</text></g>
<g transform="translate(0,1132)"><rect x="67" y="-1" width="443" height="3" fill="#00a000"/><rect x="67" y="-5" width="1" height="10" fill="#fff"/><rect x="510" y="-5" width="1" height="10" fill="#fff"/><polygon points="511,-5 517,0 511,5" fill="#00a000"/><text x="527" y="4" fill="#fff">UniRef100_Q46NY6</text></g>
<g transform="translate(0,1143)"><rect x="10" y="-1" width="91" height="2" fill="#0a0a30"/><rect x="101" y="-1" width="409" height="3" fill="#00a000"/><rect x="101" y="-5" width="1" height="10" fill="#fff"/><rect x="510" y="-5" width="1" height="10" fill="#fff"/><polygon points="511,-5 517,0 511,5" fill="#00a000"/><text x="527" y="4" fill="#fff">UniRef100_Q394W6</text></g>
<g transform="translate(0,1154)"><rect x="46" y="-1" width="429" height="3" fill="#00a000"/><rect x="46" y="-5" width="1" height="10" fill="#fff"/><rect x="475" y="-5" width="1" height="10" fill="#fff"/><polygon points="476,-5 482,0 476,5" fill="#00a000"/><rect x="482" y="-1" width="44" height="2" fill="#0a0a30"/><text x="527" y="4" fill="#fff">UniRef100_C1YIE1</text></g>
<g transform="translate(0,1165)"><rect x="10" y="-1" width="91" height="2" fill="#0a0a30"/><rect x="101" y="-1" width="409" height="3" fill="#00a000"/><rect x="101" y="-5" width="1" height="10" fill="#fff"/><rect x="510" y="-5" width="1" height="10" fill="#fff"/><polygon points="511,-5 517,0 511,5" fill="#00a000"/><text x="527" y="4" fill="#fff">UniRef100_UPI000..</text></g>
<g transform="translate(0,1176)"><rect x="101" y="-1" width="409" height="3" fill="#00a000"/><rect x="101" y="-5" width="1" height="10" fill="#fff"/><rect x="510" y="-5" width="1" height="10" fill="#fff"/><polygon points="511,-5 517,0 511,5" fill="#00a000"/><text x="527" y="4" fill="#fff">UniRef100_B4EHF4</text></g>
<g transform="translate(0,1187)"><rect x="10" y="-1" width="84" height="2" fill="#0a0a30"/><rect x="94" y="-1" width="416" height="3" fill="#00a000"/><rect x="94" y="-5" width="1" height="10" fill="#fff"/><rect x="510" y="-5" width="1" height="10" fill="#fff"/><polygon points="511,-5 517,0 511,5" fill="#00a000"/><text x="527" y="4" fill="#fff">UniRef100_A6V9E4</text></g>
<g transform="translate(0,1198)"><rect x="101" y="-1" width="409" height="3" fill="#00a000"/><rect x="101" y="-5" width="1" height="10" fill="#fff"/><rect x="510" y="-5" width="1" height="10" fill="#fff"/><polygon points="511,-5 517,0 511,5" fill="#00a000"/><text x="527" y="4" fill="#fff">UniRef100_Q5YYG4</text></g>
<g transform="translate(0,1209)"><rect x="10" y="-1" width="91" height="2" fill="#0a0a30"/><rect x="101" y="-1" width="409" height="3" fill="#00a000"/><rect x="101" y="-5" width="1" height="10" fill="#fff"/><rect x="510" y="-5" width="1" height="10" fill="#fff"/><polygon points="511,-5 517,0 511,5" fill="#00a000"/><text x="527" y="4" fill="#fff">UniRef100_A9AL44</text></g>
<g transform="translate(0,1220)"><rect x="101" y="-1" width="409" height="3" fill="#00a000"/><rect x="101" y="-5" width="1" height="10" fill="#fff"/><rect x="510" y="-5" width="1" height="10" fill="#fff"/><polygon points="511,-5 517,0 511,5" fill="#00a000"/><text x="527" y="4" fill="#fff">UniRef100_C2AMT9</text></g>
<g transform="translate(0,1231)"><rect x="10" y="-1" width="91" height="2" fill="#0a0a30"/><rect x="101" y="-1" width="409" height="3" fill="#00a000"/><rect x="101" y="-5" width="1" height="10" fill="#fff"/><rect x="510" y="-5" width="1" height="10" fill="#fff"/><polygon points="511,-5 517,0 511,5" fill="#00a000"/><text x="527" y="4" fill="#fff">UniRef100_B9BJ22</text></g>
<g transform="translate(0,1242)"><rect x="101" y="-1" width="409" height="3" fill="#00a000"/><rect x="101" y="-5" width="1" height="10" fill="#fff"/><rect x="510" y="-5" width="1" height="10" fill="#fff"/><polygon points="511,-5 517,0 511,5" fill="#00a000"/><text x="527" y="4" fill="#fff">UniRef100_B9B704</text></g>
<g transform="translate(0,1253)"><rect x="10" y="-1" width="70" height="2" fill="#0a0a30"/><rect x="80" y="-1" width="430" height="3" fill="#00a000"/><rect x="80" y="-5" width="1" height="10" fill="#fff"/><rect x="510" y="-5" width="1" height="10" fill="#fff"/><polygon points="511,-5 517,0 511,5" fill="#00a000"/><rect x="517" y="-1" width="9" height="2" fill="#0a0a30"/><text x="527" y="4" fill="#fff">UniRef100_UPI000..</text></g>
<g transform="translate(0,1264)"><rect x="115" y="-1" width="395" height="3" fill="#00a000"/><rect x="115" y="-5" width="1" height="10" fill="#fff"/><rect x="510" y="-5" width="1" height="10" fill="#fff"/><polygon points="511,-5 517,0 511,5" fill="#00a000"/><text x="527" y="4" fill="#fff">UniRef100_UPI000..</text></g>
<g transform="translate(0,1275)"><rect x="10" y="-1" width="98" height="2" fill="#0a0a30"/><rect x="108" y="-1" width="402" height="3" fill="#00a000"/><rect x="108" y="-5" width="1" height="10" fill="#fff"/><rect x="510" y="-5" width="1" height="10" fill="#fff"/><polygon points="511,-5 517,0 511,5" fill="#00a000"/><rect x="517" y="-1" width="9" height="2" fill="#0a0a30"/><text x="527" y="4" fill="#fff">UniRef100_UPI000..</text></g>
</g>
<g font-size="10" fill="#fff">
<text x="8" y="1297">Large gaps:</text>
<polygon points="68,1290 66,1296 70,1296" fill="#ffff80"/>
<text x="71" y="1297">(in Query)/</text>
<rect x="137" y="1292" width="5" height="1" fill="#1cc4c4"/>
<text x="143" y="1297"> (in Subject)</text>
<rect x="363" y="1287" width="1" height="10" fill="#fff"/>
<rect x="364" y="1291" width="13" height="3" fill="#1cc4c4"/>
<rect x="377" y="1287" width="1" height="10" fill="#fff"/>
<text x="379" y="1297">=50char.</text>
</g>
</svg>
</body></html>
